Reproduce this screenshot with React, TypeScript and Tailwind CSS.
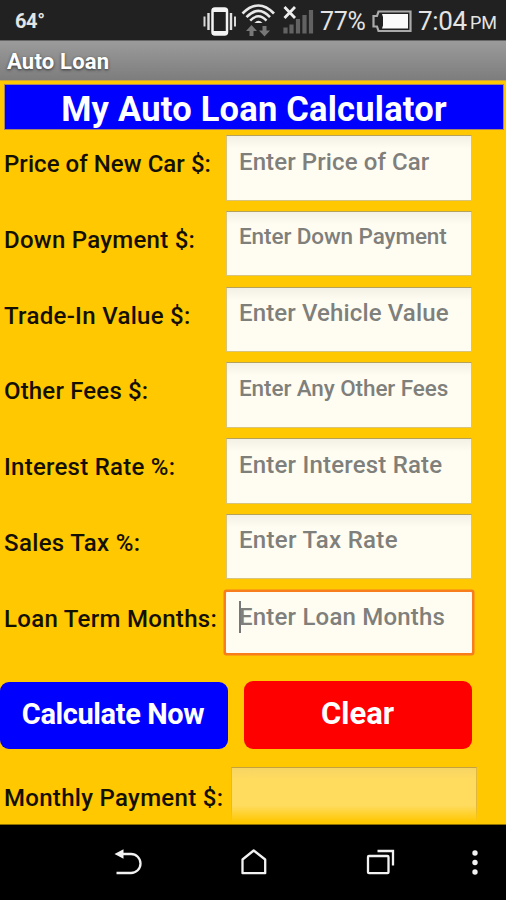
import clsx from "clsx";

interface Field {
   label: string;
   placeholder: string;
   labelClass: string;
   hintClass: string;
   focused?: boolean;
}

const fields: Field[] = [
   { label: "Price of New Car $:", placeholder: "Enter Price of Car", labelClass: "tracking-[0.05px]", hintClass: "text-[24px] tracking-[0.1px]" },
   { label: "Down Payment $:", placeholder: "Enter Down Payment", labelClass: "tracking-[0.27px]", hintClass: "text-[22.5px] tracking-[-0.1px]" },
   { label: "Trade-In Value $:", placeholder: "Enter Vehicle Value", labelClass: "tracking-[0.3px]", hintClass: "text-[24px] tracking-[0.13px]" },
   { label: "Other Fees $:", placeholder: "Enter Any Other Fees", labelClass: "tracking-[0.17px]", hintClass: "text-[22.5px] tracking-[-0.1px]" },
   { label: "Interest Rate %:", placeholder: "Enter Interest Rate", labelClass: "tracking-[0.25px]", hintClass: "text-[24px] tracking-[0.2px]" },
   { label: "Sales Tax %:", placeholder: "Enter Tax Rate", labelClass: "tracking-[0.35px]", hintClass: "text-[24px] tracking-[0.3px]" },
   { label: "Loan Term Months:", placeholder: "Enter Loan Months", labelClass: "tracking-[0.3px]", hintClass: "text-[24px] tracking-[0.2px]", focused: true },
];

const StatusBar = () => (
   <div className="flex h-10 bg-[#212121] text-[#e4e4e4]">
      <span className="ml-[15px] w-[188px] text-[20px] leading-[42px] font-bold tracking-[-0.4px]">64°</span>
      <svg width="112" height="40" viewBox="203 0 112 40" fill="none">
         {/* vibrate */}
         <rect x="212.5" y="8.5" width="14.5" height="26" rx="2.5" stroke="#f4f4f4" strokeWidth="2.5" />
         <path d="M212.5 10h14.5M212.5 33h14.5" stroke="#f4f4f4" strokeWidth="4" />
         <path d="M208.5 13v17M231 13v17" stroke="#e0e0e0" strokeWidth="2.4" />
         <path d="M204.5 16.5v10M235 16.5v10" stroke="#d8d8d8" strokeWidth="2" />
         {/* wifi */}
         <path d="M242.5 13.5Q258.5 -2.5 274 13.5" stroke="#e8e8e8" strokeWidth="2.7" />
         <path d="M246.5 17.2Q258.5 4.5 270 17.2" stroke="#e8e8e8" strokeWidth="2.6" />
         <path d="M250.2 20.7Q258.5 12 266.5 20.7" stroke="#e8e8e8" strokeWidth="2.5" />
         <path d="M254.5 23Q258.4 18.5 262.5 23z" fill="#e8e8e8" />
         <path d="M251.5 25l5.5 6h-3.5v5h-4v-5H246z" fill="#777" />
         <path d="M264.5 36.5l5.5-6h-3.5v-4.5h-4v4.5H259z" fill="#777" />
         {/* signal */}
         <path d="M284.5 7l10.5 11M295 7l-10.5 11" stroke="#ededed" strokeWidth="2.8" />
         <path d="M285.5 33.5v-6M291.5 33.5v-9M298 33.5v-14.5M304.5 33.5V15M311 33.5V10" stroke="#626262" strokeWidth="4.2" />
      </svg>
      <span className="ml-[5px] w-[51px] text-[25px] leading-[43px] whitespace-nowrap tracking-[-0.3px]">77%</span>
      <svg width="42" height="40" viewBox="371 0 42 40" fill="none">
         <path d="M378.5 11.5h32v19.5h-32l-1.5-4.5h-3.5v-10.5h3.5z" stroke="#aaa" strokeWidth="2.2" />
         <path d="M382 14h26v14.5h-26l1-3v-8.5z" fill="#fafafa" />
      </svg>
      <span className="ml-[5px] w-[52px] text-[26px] leading-[43px] whitespace-nowrap tracking-[-0.3px]">7:04</span>
      <span className="text-[18px] leading-[46px] whitespace-nowrap">PM</span>
   </div>
);

const FieldRow = ({ label, placeholder, labelClass, hintClass, focused }: Field) => (
   <div className="flex h-[75.8px]">
      <label className={clsx("w-[226px] shrink-0 pl-1 text-[24px] leading-[59px] font-medium whitespace-nowrap text-[#141000]", labelClass)}>
         {label}
      </label>
      <div
         className={clsx(
            "w-[246px] bg-[#fffdf2] font-medium whitespace-nowrap text-[#7f7f7b]",
            focused
               ? "mt-[2.2px] h-[61px] rounded-[1px] pl-[13px] shadow-[0_0_0_2.5px_#f87d1c]"
               : "h-[65.5px] border border-[#d8c47c] border-t-[#b5a15a] bg-linear-to-b from-[#f3f0e6] to-[#fffdf2] to-20% pl-3"
         )}
      >
         <div className={clsx("flex items-center", focused ? "h-[50px]" : "h-[51px]", hintClass)}>
            {focused && <span className="-mr-0.5 h-8 w-0.5 bg-[#777]" />}
            <span>{placeholder}</span>
         </div>
      </div>
   </div>
);

const NavBar = () => (
   <div className="h-[75px] bg-black">
      <svg width="506" height="75" viewBox="0 825 506 75" fill="none" stroke="#f2f2f2" strokeWidth="2.3">
         <path d="M121 854h10a9.5 9.5 0 0 1 0 19h-14.5" />
         <path d="M114.5 854l9-4.7v9.4z" fill="#f2f2f2" stroke="none" />
         <path d="M242.5 859.5v13.7h22.7v-13.7l-11.5-9z" strokeLinejoin="round" />
         <rect x="368" y="856" width="20.5" height="17.2" rx="1" />
         <path d="M377.5 851h15.5v14.5" />
         <g fill="#f2f2f2" stroke="none">
            <circle cx="475" cy="853" r="2.7" />
            <circle cx="475" cy="862.5" r="2.7" />
            <circle cx="475" cy="872" r="2.7" />
         </g>
      </svg>
   </div>
);

const App = () => {
   return (
      <div className="flex h-[900px] w-[506px] flex-col overflow-hidden bg-[#ffc800] font-['Roboto',sans-serif]">
         <StatusBar />
         <div className="h-10 border-t border-[#666] bg-linear-to-b from-[#9b9b9b] to-[#7d7d7d] pl-[7px] text-[22px] leading-[42px] font-bold tracking-[0.2px] text-white [text-shadow:0_1px_3px_#333]">
            Auto Loan
         </div>
         <div className="h-[745px] overflow-hidden border-t border-b border-t-[#d0a63c] border-b-[#8f7100]">
            <h1 className="mt-[3px] ml-[4px] h-[46px] w-[500px] border border-[#a88468] bg-[#0000fe] text-center text-[34.5px] leading-[48px] font-bold tracking-[0.22px] whitespace-nowrap text-white">
               My Auto Loan Calculator
            </h1>
            <div className="mt-[5px]">
               {fields.map((field) => (
                  <FieldRow key={field.label} {...field} />
               ))}
            </div>
            <div className="mt-[15.4px] flex items-end gap-4 font-bold text-white">
               <button className="h-[67px] w-[228px] rounded-[9px] bg-[#0000fe] pr-0.5 pb-px text-[29px] tracking-[-0.4px]">Calculate Now</button>
               <button className="h-[68px] w-[228px] rounded-[9px] bg-[#fe0000] pr-px pb-px text-[31px]">Clear</button>
            </div>
            <div className="mt-[17px] flex">
               <span className="w-[231px] pl-1 text-[24px] leading-[65px] font-medium tracking-[0.3px] whitespace-nowrap text-[#141000]">
                  Monthly Payment $:
               </span>
               {/* result box fades out at the bottom of the scroll area */}
               <div className="mt-px h-[55px] w-[246px] border-x border-t border-[#e0b840] border-t-[#c5a040] bg-linear-to-b from-[#f6d564] via-[#ffdb5e] via-20% to-[#ffdb5e] to-75% mask-b-from-70% mask-b-to-100%" />
            </div>
         </div>
         <NavBar />
      </div>
   );
};

export default App;
